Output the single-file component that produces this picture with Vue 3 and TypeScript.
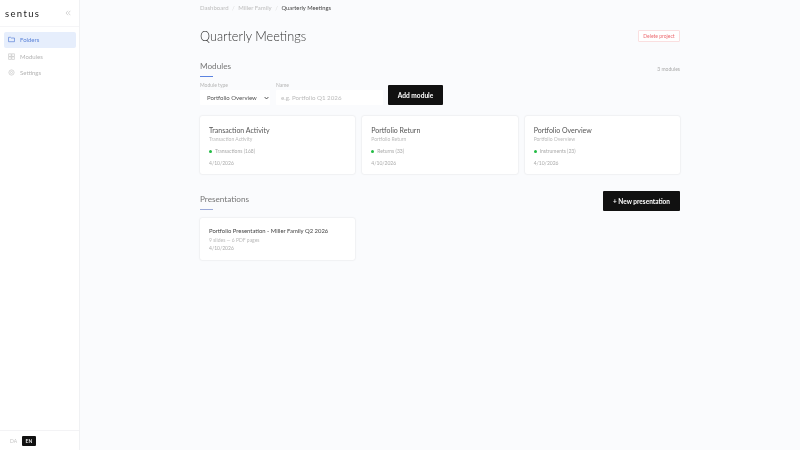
<script setup lang="ts">
interface Mod { title: string; type: string; status: string }
const mods: Mod[] = [
  { title: 'Transaction Activity', type: 'Transaction Activity', status: 'Transactions (168)' },
  { title: 'Portfolio Return', type: 'Portfolio Return', status: 'Returns (33)' },
  { title: 'Portfolio Overview', type: 'Portfolio Overview', status: 'Instruments (23)' },
]
</script>

<template>
  <div class="app">
    <aside class="side">
      <div class="brand">
        <span class="logo">sentus</span>
        <svg class="collapse" width="6" height="6" viewBox="0 0 6 6" fill="none" stroke="#c4c4c4" stroke-width=".7"><path d="M3 .8 1 3l2 2.200M5.300 .8 3.300 3l2 2.200"/></svg>
      </div>
      <nav class="nav">
        <a class="item active">
          <svg width="7" height="7" viewBox="0 0 8 8" fill="none" stroke="#5b83d8" stroke-width=".8"><path d="M.6 1.500h2.300l.8.8h3.700v4.200H.6z"/></svg>
          Folders
        </a>
        <a class="item">
          <svg width="7" height="7" viewBox="0 0 8 8" fill="none" stroke="#c8c8c8" stroke-width=".8"><rect x=".8" y="1" width="2.800" height="2.800"/><rect x="4.400" y="1" width="2.800" height="2.800"/><rect x=".8" y="4.400" width="2.800" height="2.800"/><rect x="4.400" y="4.400" width="2.800" height="2.800"/></svg>
          Modules
        </a>
        <a class="item">
          <svg width="7" height="7" viewBox="0 0 8 8" fill="none" stroke="#c8c8c8" stroke-width=".8"><circle cx="4" cy="4" r="1.200"/><circle cx="4" cy="4" r="3"/></svg>
          Settings
        </a>
      </nav>
      <div class="lang"><span class="da">DA</span><span class="en">EN</span></div>
    </aside>

    <main class="main">
      <div class="wrap">
        <div class="crumbs">
          <span>Dashboard</span><i>/</i><span>Miller Family</span><i>/</i><b>Quarterly Meetings</b>
        </div>
        <div class="head">
          <h1>Quarterly Meetings</h1>
          <button class="del">Delete project</button>
        </div>

        <div class="sec">
          <div>
            <h2>Modules</h2>
            <div class="rule"></div>
          </div>
          <span class="count">3 modules</span>
        </div>

        <div class="form">
          <label class="f1">
            <span>Module type</span>
            <div class="select">Portfolio Overview
              <svg width="5" height="4" viewBox="0 0 5 4" fill="none" stroke="#333" stroke-width=".8"><path d="M.6 1 2.500 3 4.400 1"/></svg>
            </div>
          </label>
          <label class="f2">
            <span>Name</span>
            <div class="input">e.g. Portfolio Q1 2026</div>
          </label>
          <button class="black add">Add module</button>
        </div>

        <div class="grid first">
          <div v-for="m in mods" :key="m.title" class="card">
            <div class="ct">{{ m.title }}</div>
            <div class="cs">{{ m.type }}</div>
            <div class="st"><i class="dot"></i>{{ m.status }}</div>
            <div class="date">4/10/2026</div>
          </div>
        </div>

        <div class="sec2">
          <div>
            <h2>Presentations</h2>
            <div class="rule r2"></div>
          </div>
          <button class="black new">+ New presentation</button>
        </div>

        <div class="grid second">
          <div class="card pres">
            <div class="pt">Portfolio Presentation - Miller Family Q2 2026</div>
            <div class="cs c2">9 slides — 6 PDF pages</div>
            <div class="date d2">4/10/2026</div>
          </div>
        </div>
      </div>
    </main>
  </div>
</template>

<style>
html, body { margin: 0; background: #fafbfd; }
</style>

<style scoped>
.app { display: flex; width: 800px; height: 450px; overflow: hidden; background: #fafbfd; font-family: Lato, "Noto Sans", sans-serif; color: #333; filter: blur(.3px); }
.side { width: 79px; border-right: 1px solid #f0f1f3; background: #fff; display: flex; flex-direction: column; }
.brand { height: 26px; padding: 0 5px; display: flex; align-items: center; justify-content: space-between; border-bottom: 1px solid #f5f5f7; }
.logo { font-size: 9.500px; letter-spacing: 1.350px; color: #222; }
.collapse { margin-right: 3px; }
.nav { padding: 5px 3px 5px 4px; display: flex; flex-direction: column; gap: 1px; flex: 1; }
.item { height: 15.500px; padding: 0 4px; display: flex; align-items: center; gap: 5px; font-size: 6px; color: #b4b4b4; border-radius: 2px; }
.active { background: #e6eefc; color: #5b83d8; }
.lang { height: 19px; border-top: 1px solid #f3f3f5; padding: 0 10px; display: flex; align-items: center; gap: 5px; font-size: 5px; }
.da { color: #c4c4c4; }
.en { background: #111; color: #eee; padding: 2px 3.500px; border-radius: 1px; font-weight: 700; }

.main { flex: 1; display: flex; justify-content: center; }
.wrap { width: 480px; }
.crumbs { height: 14px; display: flex; align-items: center; font-size: 6px; color: #bdbdbd; }
.crumbs i { margin: 0 3.500px; font-style: normal; color: #ddd; }
.crumbs b { font-weight: 400; font-size: 5.800px; color: #444; }
.head { height: 44px; display: flex; align-items: center; justify-content: space-between; }
h1 { margin: 0; font-size: 12.700px; font-weight: 300; color: #333; }
.del { width: 42px; height: 12px; padding: 0; border: 1px solid #fadfe0; border-radius: 1px; background: #fff; color: #ec6a70; font: inherit; font-size: 5px; }
.sec { display: flex; justify-content: space-between; align-items: center; padding-top: 2px; }
h2 { margin: 0; font-size: 8.200px; line-height: 12px; font-weight: 400; color: #777; }
.rule { width: 13px; height: 1px; margin-top: 4px; background: #5b83e0; }
.r2 { background: #9aa9d8; }
.count { font-size: 5px; color: #aaa; }
.form { display: flex; align-items: flex-end; gap: 6px; margin-top: 5px; }
.form label { display: flex; flex-direction: column; gap: 2px; font-size: 5px; color: #b4b4b4; }
.f1 { width: 70px; }
.f2 { width: 107px; }
.select, .input { height: 15px; background: #fff; display: flex; align-items: center; font-size: 6px; border-radius: 1px; box-sizing: border-box; }
.select { padding: 0 1px 0 7px; justify-content: space-between; color: #555; }
.input { padding: 0 5px; color: #bbb; font-size: 6.200px; }
.black { border: none; background: #111; color: #fff; font: inherit; font-weight: 700; font-size: 6.600px; padding: 0; border-radius: 1px; }
.add { width: 55px; height: 20px; margin-left: -1px; }
.grid { display: grid; grid-template-columns: repeat(3, 1fr); gap: 7px; }
.first { margin-top: 11px; }
.second { margin-top: 7px; }
.card { height: 58px; box-sizing: border-box; padding: 9px; background: #fff; border-radius: 2px; box-shadow: 0 0 2px rgba(0,0,0,.14); }
.ct { font-size: 7px; line-height: 10px; color: #555; }
.cs { font-size: 5px; line-height: 7px; color: #bbb; margin-top: 1px; }
.c2 { margin-top: 2px; }
.st { display: flex; align-items: center; gap: 3px; font-size: 5px; line-height: 7px; color: #aaa; margin-top: 5px; }
.dot { width: 3px; height: 3px; border-radius: 50%; background: #22bb44; }
.date { font-size: 5px; line-height: 7px; color: #aaa; margin-top: 5px; }
.sec2 { display: flex; justify-content: space-between; align-items: center; margin-top: 17px; }
.new { width: 77px; height: 20px; font-size: 6.500px; }
.pres { height: 42px; padding-top: 8px; }
.pt { font-size: 5.900px; line-height: 9px; color: #444; }
.d2 { margin-top: 1px; }
</style>
